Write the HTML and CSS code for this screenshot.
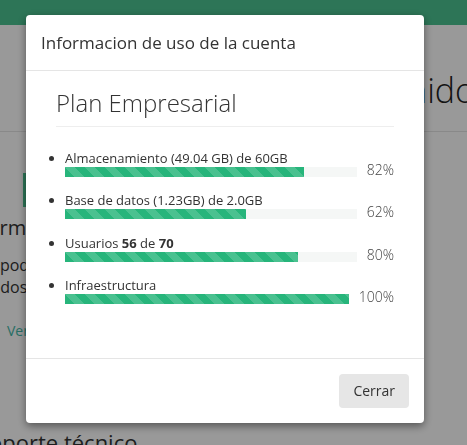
FILE: index.html
```html
<!DOCTYPE html>
<html lang="es">
<head>
<meta charset="utf-8">
<title>Informacion de uso de la cuenta</title>
<link rel="stylesheet" href="styles.css">
</head>
<body>
<div class="page">
  <div class="topbar"></div>
  <div class="hero"><h1 class="hero-title">Bienvenido</h1></div>
  <div class="content">
    <div class="accent"></div>
    <p class="lead">Informes</p>
    <p class="text text-a">Usted podrá consultar</p>
    <p class="text text-b">todos los recursos</p>
    <a class="link">Ver más</a>
    <p class="support">Soporte técnico</p>
  </div>
</div>
<div class="backdrop"></div>
<div class="modal">
  <div class="modal-header">
    <h4 class="modal-title">Informacion de uso de la cuenta</h4>
  </div>
  <div class="modal-body">
    <h2 class="plan">Plan Empresarial</h2>
    <ul class="usage">
      <li>
        <div class="label">Almacenamiento (49.04 GB) de 60GB</div>
        <div class="meter"><div class="track"><div class="fill" style="width:82%"></div></div><span class="pct">82%</span></div>
      </li>
      <li>
        <div class="label">Base de datos (1.23GB) de 2.0GB</div>
        <div class="meter"><div class="track"><div class="fill" style="width:62%"></div></div><span class="pct">62%</span></div>
      </li>
      <li>
        <div class="label">Usuarios <b>56</b> de <b>70</b></div>
        <div class="meter"><div class="track"><div class="fill" style="width:80%"></div></div><span class="pct">80%</span></div>
      </li>
      <li>
        <div class="label">Infraestructura</div>
        <div class="meter"><div class="track"><div class="fill" style="width:100%"></div></div><span class="pct">100%</span></div>
      </li>
    </ul>
  </div>
  <div class="modal-footer">
    <button class="btn" type="button">Cerrar</button>
  </div>
</div>
</body>
</html>
```
FILE: styles.css
```css
html, body {
  margin: 0;
  padding: 0;
  height: 100%;
  overflow: hidden;
}
body {
  font-family: "Open Sans", "Liberation Sans", sans-serif;
  color: #333;
  background: #fff;
}
.page {
  width: 100%;
}
.topbar {
  height: 25px;
  background: #4bc391;
}
.hero {
  display: flex;
  justify-content: flex-end;
  padding: 47px 0 22px;
  border-bottom: 1px solid #e5e5e5;
}
.hero-title {
  margin: 0 -8px 0 0;
  font-size: 34px;
  font-weight: 300;
  line-height: 37px;
  color: #222;
  white-space: nowrap;
}
.content {
  display: flex;
  flex-direction: column;
  align-items: flex-start;
}
.accent {
  margin: 41px 0 0 23px;
  width: 60px;
  height: 34px;
  background: #4bc391;
}
.lead {
  margin: 7px 0 0 -37px;
  font-size: 20px;
  line-height: 28px;
  white-space: nowrap;
}
.text {
  margin: 0;
  font-size: 16px;
  line-height: 22px;
  white-space: nowrap;
}
.text-a { margin: 12px 0 0 -48px; }
.text-b { margin: 0 0 0 -15px; }
.link {
  margin: 23px 0 0 7px;
  font-size: 14px;
  line-height: 20px;
  color: #43b8a8;
}
.support {
  margin: 86px 0 0 -23px;
  font-size: 22px;
  line-height: 30px;
  white-space: nowrap;
}
.backdrop {
  position: fixed;
  inset: 0;
  background: rgba(0, 0, 0, 0.4);
}
.modal {
  position: fixed;
  left: 26px;
  top: 15px;
  width: 398px;
  background: #fff;
  border-radius: 4px;
  box-shadow: 0 3px 9px rgba(0, 0, 0, 0.45);
}
.modal-header {
  padding: 15px;
  border-bottom: 1px solid #e5e5e5;
}
.modal-title {
  margin: 0;
  font-size: 17px;
  font-weight: 400;
  line-height: 25px;
  color: #333;
}
.modal-body {
  padding: 15px 30px;
}
.plan {
  margin: 4px 0 0;
  padding-bottom: 10px;
  border-bottom: 1px solid #eee;
  font-size: 24px;
  font-weight: 300;
  line-height: 26px;
  color: #333;
}
.usage {
  margin: 22px 0 0;
  padding: 0 0 25px 9px;
  list-style: disc;
}
.usage li {
  margin-bottom: 14.33px;
  font-size: 13px;
}
.label {
  line-height: 18px;
}
.label b { font-weight: 700; }
.meter {
  display: flex;
  align-items: center;
  height: 10px;
}
.track {
  flex: 1;
  height: 10px;
  background: #f5f7f6;
}
.fill {
  height: 100%;
  background-color: #27b57b;
  background-image: linear-gradient(45deg, rgba(255,255,255,.16) 25%, transparent 25%, transparent 50%, rgba(255,255,255,.16) 50%, rgba(255,255,255,.16) 75%, transparent 75%, transparent);
  background-size: 20px 20px;
}
.pct {
  margin-left: 10px;
  font-size: 14px;
  font-weight: 300;
  line-height: 10px;
  color: #444;
  position: relative;
  top: -2px;
}
.modal-footer {
  display: flex;
  justify-content: flex-end;
  padding: 15px;
  border-top: 1px solid #e5e5e5;
}
.btn {
  font-family: inherit;
  font-size: 14px;
  line-height: 20px;
  padding: 7px 14px;
  border: 0;
  border-radius: 4px;
  background: #e6e6e6;
  color: #333;
}
```
